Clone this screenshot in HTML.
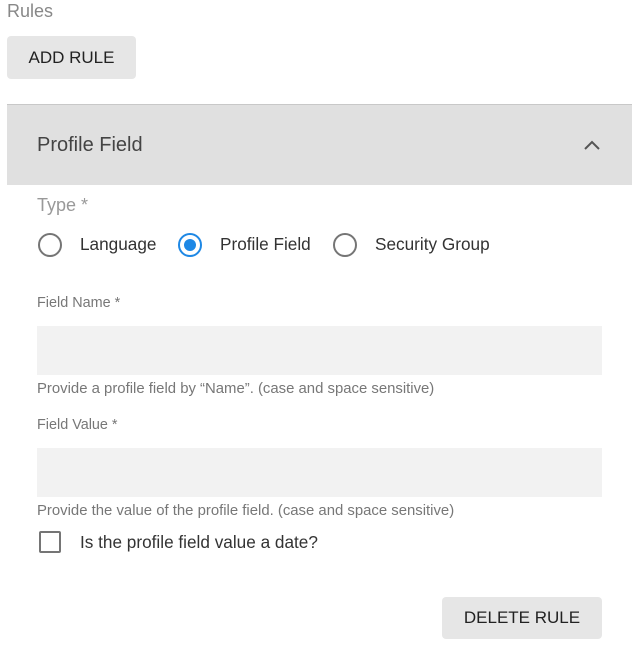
<!DOCTYPE html>
<html><head><style>
body{margin:0;width:637px;height:646px;background:#fff;font-family:"Liberation Sans",sans-serif;position:relative;overflow:hidden}
.a{position:absolute;white-space:nowrap}
.btn{position:absolute;background:#e6e6e6;border-radius:4px;color:#222;font-size:17px;display:flex;align-items:center;justify-content:center}
.radio{position:absolute;width:20px;height:20px;border:2px solid #757575;border-radius:50%}
.inp{position:absolute;left:37px;width:565px;height:49px;background:#f2f2f2}
.lbl{color:#777;font-size:14.4px}
.hlp{color:#777;font-size:14.9px}
</style></head><body>
<div class="a" style="left:7px;top:0;font-size:18px;color:#888;line-height:22px">Rules</div>
<div class="btn" style="left:7px;top:36px;width:129px;height:43px">ADD RULE</div>
<div class="a" style="left:7px;top:104px;width:625px;height:81px;background:#e0e0e0;border-top:1px solid #c8c8c8;box-sizing:border-box"></div>
<div class="a" style="left:37px;top:133px;font-size:20px;color:#444;line-height:24px">Profile Field</div>
<svg class="a" style="left:582px;top:137px" width="20" height="16" viewBox="0 0 20 16"><path d="M3 12 L10 5 L17 12" fill="none" stroke="#555" stroke-width="2"/></svg>
<div class="a" style="left:37px;top:194px;font-size:18px;color:#999;line-height:22px">Type *</div>
<div class="radio" style="left:38px;top:233px"></div>
<div class="a" style="left:80px;top:234px;font-size:17.2px;color:#333;line-height:21px">Language</div>
<div class="radio" style="left:178px;top:233px;border-color:#1e88e5"><div style="position:absolute;left:4px;top:4px;width:12px;height:12px;border-radius:50%;background:#1e88e5"></div></div>
<div class="a" style="left:220px;top:234px;font-size:17.2px;color:#333;line-height:21px">Profile Field</div>
<div class="radio" style="left:333px;top:233px"></div>
<div class="a" style="left:375px;top:234px;font-size:17.2px;color:#333;line-height:21px">Security Group</div>
<div class="a lbl" style="left:37px;top:295px">Field Name *</div>
<div class="inp" style="top:326px"></div>
<div class="a hlp" style="left:37px;top:381px">Provide a profile field by “Name”. (case and space sensitive)</div>
<div class="a lbl" style="left:37px;top:417px">Field Value *</div>
<div class="inp" style="top:448px"></div>
<div class="a hlp" style="left:37px;top:503px">Provide the value of the profile field. (case and space sensitive)</div>
<div class="a" style="left:39px;top:531px;width:18px;height:18px;border:2px solid #757575;border-radius:2px"></div>
<div class="a" style="left:80px;top:532px;font-size:17.2px;color:#333;line-height:21px">Is the profile field value a date?</div>
<div class="btn" style="left:442px;top:597px;width:160px;height:42px">DELETE RULE</div>
</body></html>
